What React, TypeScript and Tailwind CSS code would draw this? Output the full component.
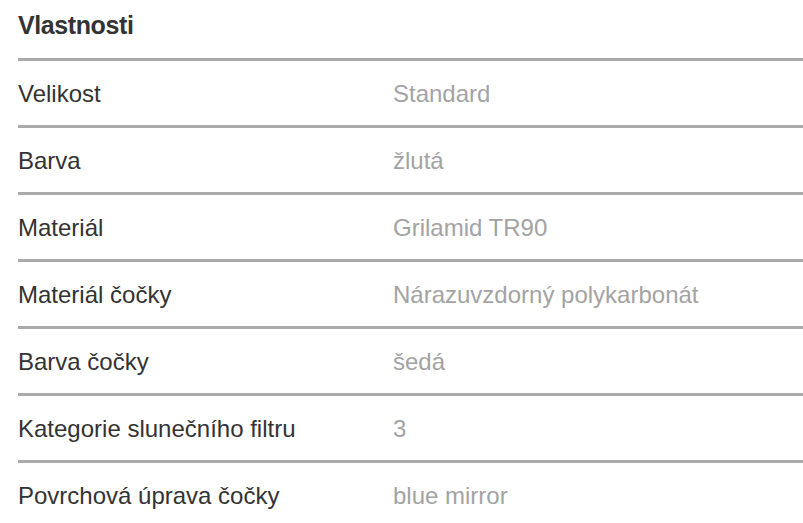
const rows: [string, string][] = [
  ['Velikost', 'Standard'],
  ['Barva', 'žlutá'],
  ['Materiál', 'Grilamid TR90'],
  ['Materiál čočky', 'Nárazuvzdorný polykarbonát'],
  ['Barva čočky', 'šedá'],
  ['Kategorie slunečního filtru', '3'],
  ['Povrchová úprava čočky', 'blue mirror'],
]

export default function App() {
  return (
    <div className="min-h-screen bg-white pl-[18px] font-['Liberation_Sans',Arial,sans-serif]">
      <div className="flex h-[58px] items-center pb-[6px]">
        <h2 className="text-[25px] font-bold tracking-[-0.4px] text-[#333]">Vlastnosti</h2>
      </div>
      {rows.map(([label, value]) => (
        <div
          key={label}
          className="flex h-[67px] items-center border-t-[3px] border-[#aaaaaa] pt-[1px] text-[24px]"
        >
          <span className="w-[375px] shrink-0 text-[#333]">{label}</span>
          <span className="text-[#a3a3a3]">{value}</span>
        </div>
      ))}
    </div>
  )
}
